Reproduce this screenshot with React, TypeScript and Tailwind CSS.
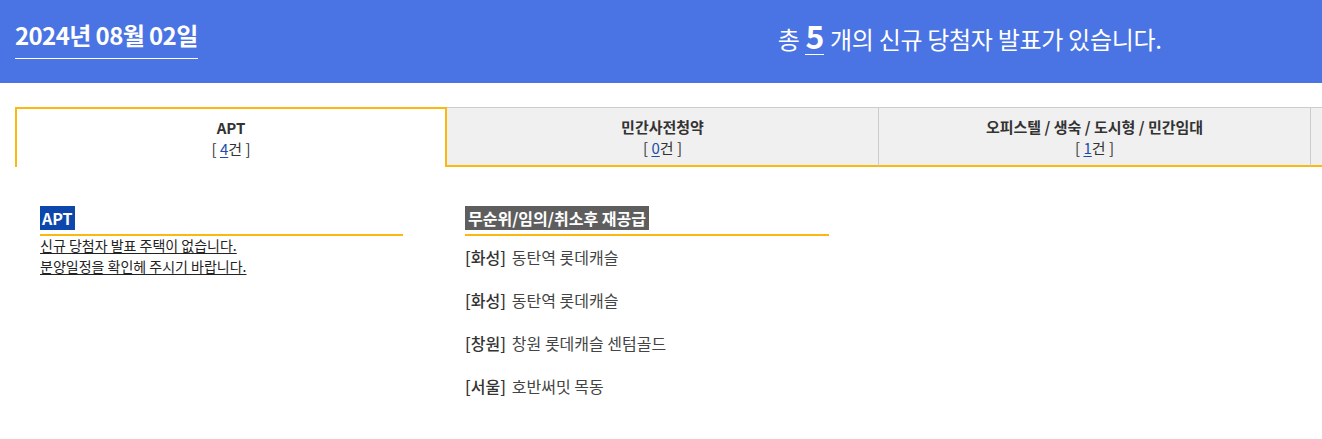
const TABS = [
  { label: "APT", count: 4 },
  { label: "민간사전청약", count: 0 },
  { label: "오피스텔 / 생숙 / 도시형 / 민간임대", count: 1 },
]

const items = [
  { area: "화성", name: "동탄역 롯데캐슬" },
  { area: "화성", name: "동탄역 롯데캐슬" },
  { area: "창원", name: "창원 롯데캐슬 센텀골드" },
  { area: "서울", name: "호반써밋 목동" },
]

const font = { fontFamily: '"Noto Sans CJK KR", "Noto Sans", sans-serif' }

export default function App() {
  return (
    <div className="min-h-screen w-[1322px] overflow-hidden bg-white text-[#333]" style={font}>
      {/* Header */}
      <div className="flex h-[83px] items-start bg-[#4a74e4] text-white">
        <div className="ml-[15px] mt-[18px] border-b border-white pb-[6px] text-[24px] font-bold leading-[34px] tracking-[-0.6px]">
          2024년 08월 02일
        </div>
        <div className="ml-[580px] mt-[16px] flex items-baseline text-[24px] leading-[38px] tracking-[-0.3px]">
          <span>총</span>
          <span className="mx-[6px] border-b border-white text-[32px] font-bold leading-[38px]">5</span>
          <span>개의 신규 당첨자 발표가 있습니다.</span>
        </div>
      </div>

      {/* Tabs */}
      <div className="mt-[24px] ml-[15px] flex w-max">
        {TABS.map((tab, i) => (
          <div
            key={tab.label}
            className={`flex h-[60px] w-[432px] shrink-0 flex-col items-center justify-center text-[15px] leading-[21px] ${
              i === 0
                ? "border-2 border-b-0 border-[#fbb810] bg-white"
                : "border-t border-r border-[#cccccc] border-b-2 border-b-[#fbb810] bg-[#f0f0f0]"
            }`}
          >
            <span className="font-bold text-[#333]">{tab.label}</span>
            <span className="text-[#333]">
              [ <span className="text-[#1a4fa8] underline underline-offset-2">{tab.count}</span>건 ]
            </span>
          </div>
        ))}
        {/* next tab, cut off at the window edge */}
        <div className="h-[60px] w-[432px] shrink-0 border-t border-[#cccccc] border-b-2 border-b-[#fbb810] bg-[#f0f0f0]" />
      </div>

      {/* Content */}
      <div className="mt-[39px] ml-[40px] flex gap-[62px]">
        <div className="w-[363px]">
          <div className="border-b-2 border-[#fbb810] pb-[4px]">
            <span className="inline-block bg-[#0d47ab] px-[2px] text-[16px] font-bold leading-[24px] text-white">APT</span>
          </div>
          <div className="-mt-px text-[14px] leading-[21px] text-[#222]">
            <p className="underline underline-offset-2">신규 당첨자 발표 주택이 없습니다.</p>
            <p className="underline underline-offset-2">분양일정을 확인헤 주시기 바랍니다.</p>
          </div>
        </div>

        <div className="w-[364px]">
          <div className="border-b-2 border-[#fbb810] pb-[4px]">
            <span className="inline-block bg-[#5e5e5e] px-[3px] text-[16px] font-bold leading-[24px] text-white">
              무순위/임의/취소후 재공급
            </span>
          </div>
          <ul className="mt-[10px] flex flex-col gap-[21px]">
            {items.map((it, i) => (
              <li key={i} className="text-[16px] leading-[22px] text-[#444]">
                <span className="font-medium text-[#333]">[{it.area}]</span>
                <span className="ml-[6px]">{it.name}</span>
              </li>
            ))}
          </ul>
        </div>
      </div>
    </div>
  )
}
